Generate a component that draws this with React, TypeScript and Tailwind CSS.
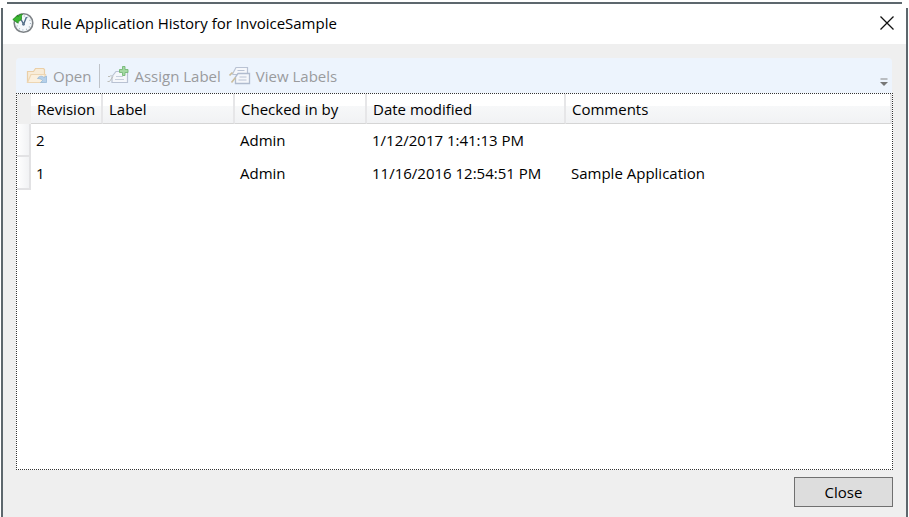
const revisions = [
  { revision: "2", label: "", user: "Admin", modified: "1/12/2017 1:41:13 PM", comments: "" },
  { revision: "1", label: "", user: "Admin", modified: "11/16/2016 12:54:51 PM", comments: "Sample Application" },
];

const headCell =
  "h-[30px] border-b border-[#d5d5d5] border-r-2 border-r-[#e6e6e8] bg-linear-to-b from-white from-40% via-[#f7f8f9] via-42% to-[#f1f2f4] pl-[6px] text-left font-normal whitespace-nowrap";

const bodyCell = "pb-[2px] pl-[5px] whitespace-nowrap";

function HistoryIcon() {
  return (
    <svg width="22" height="22" viewBox="0 0 22 22" aria-hidden="true">
      <circle cx="11.5" cy="11" r="9.3" fill="#f4f8fb" stroke="#7e8387" strokeWidth="1.6" />
      <circle cx="11.5" cy="11" r="7" fill="none" stroke="#9fb0bf" strokeWidth="1.2" strokeDasharray="1 2.67" />
      <path d="M11.5 12L9 7.5M11.500 12.500L14.500 5" fill="none" stroke="#4d6a86" strokeWidth="1.4" />
      <circle cx="11.5" cy="12.3" r="1.4" fill="#5f7890" />
      <path
        d="M0.800 7.500L6 3v2C7 2.800 8.500 2 10.500 2.200c-1 1-1.200 2-1 3.800.1 1.500-.8 3-3.300 3.200v2z"
        fill="#3cb832"
        stroke="#1f861c"
        strokeWidth="0.800"
      />
    </svg>
  );
}

function OpenIcon() {
  return (
    <svg width="22" height="20" viewBox="0 0 22 20" aria-hidden="true">
      <path d="M1.500 16.500V5.500h6l2-3h8l1 1v5" fill="#f8ecd8" stroke="#eacfa8" strokeWidth="1.2" />
      <path d="M1.500 16.500L5 8.500h14.500l-3 8z" fill="#fbf0de" stroke="#edd6b3" strokeWidth="1.2" />
      <path
        d="M11.500 12.500c1.500-2.500 4.500-3 6.500-1l2.500-1.500v6.500h-6l2-2c-1.200-1.500-3-2-5-2z"
        fill="#b5d0ea"
        stroke="#91b4d6"
        strokeWidth="0.700"
      />
    </svg>
  );
}

function AssignIcon() {
  return (
    <svg width="22" height="20" viewBox="0 0 22 20" aria-hidden="true">
      <path d="M5 10.500L9 5.500h11.500v11H5z" fill="#f5f7fb" stroke="#b9c2d3" strokeWidth="1.2" />
      <path d="M9 10.500h7M8 13.500h9" stroke="#c8cfdc" />
      <path d="M0.500 15.500h2L6 10.500M1 10.500h2l1.500-1.500" fill="none" stroke="#bdbdb8" />
      <path d="M15.500 0.500h2.500v3h3v3h-3v3h-2.500v-3h-3v-3h3z" fill="#a4d9a2" stroke="#75b877" strokeWidth="0.900" />
    </svg>
  );
}

function ViewIcon() {
  return (
    <svg width="22" height="20" viewBox="0 0 22 20" aria-hidden="true">
      <path d="M3.500 8L7 1.500h11.500v7H4z" fill="#f5f7fb" stroke="#b9c2d3" strokeWidth="1.2" />
      <path d="M6.500 11L9 7.500h11.500v10h-14z" fill="#f5f7fb" stroke="#b0bbce" strokeWidth="1.3" />
      <path d="M8.500 4.500h7M10.500 11h7M9.500 14h8" stroke="#b9c2d3" />
      <path d="M0.500 9.500L3.500 6.500M2.500 16.500l4-5" fill="none" stroke="#cbbd9c" strokeWidth="1.6" />
    </svg>
  );
}

export default function App() {
  return (
    <div className="flex min-h-screen flex-col bg-white font-['Open_Sans','Noto_Sans',sans-serif] text-[15px] leading-5 text-black">
      {/* Top edge of the window frame */}
      <div className="mx-[7px] mt-[2px] mb-1 h-[2px] bg-[#5d676d]" />
      <div className="mr-px ml-px flex flex-1 flex-col border-x-2 border-[#5d676d]">
        <header className="flex h-9 items-start justify-between pr-3 pl-[9px]">
          <div className="flex items-center gap-[7px] pt-1">
            <HistoryIcon />
            <h1>Rule Application History for InvoiceSample</h1>
          </div>
          <button type="button" aria-label="Close window" className="pt-2">
            <svg width="14" height="14" viewBox="0 0 14 14" aria-hidden="true">
              <path d="M0.500 0.500l13 13M13.500 0.500l-13 13" stroke="#111" strokeWidth="1.300" />
            </svg>
          </button>
        </header>

        <main className="flex flex-1 flex-col bg-[#efefef] px-[13px] pt-[14px] pb-[10px]">
          <div role="toolbar" className="mr-px flex h-[35px] items-center rounded-t-[4px] bg-[#edf4fd] pl-[10px] text-[#9a9b9d]">
            <button type="button" disabled className="flex items-center gap-[5px]">
              <OpenIcon />
              Open
            </button>
            <div className="mr-[7px] ml-2 h-6 w-px bg-[#bfc3c9]" />
            <button type="button" disabled className="flex items-center gap-[5px]">
              <AssignIcon />
              Assign Label
            </button>
            <button type="button" disabled className="ml-2 flex items-center gap-[5px]">
              <ViewIcon />
              View Labels
            </button>
            <button type="button" aria-label="Toolbar options" className="mr-1 ml-auto pt-3">
              <svg width="8" height="8" viewBox="0 0 8 8" aria-hidden="true">
                <path d="M0.500 1h7" stroke="#858585" />
                <path d="M0 4h8L4 8z" fill="#777" />
              </svg>
            </button>
          </div>

          <div className="flex-1 border border-dotted border-[#333] bg-white">
            <table className="w-full table-fixed border-separate border-spacing-0">
              <colgroup>
                <col className="w-[14px]" />
                <col className="w-[72px]" />
                <col className="w-[132px]" />
                <col className="w-[132px]" />
                <col className="w-[199px]" />
                <col />
              </colgroup>
              <thead>
                <tr>
                  <td className="bg-[#efefef]" />
                  <th className={headCell}>Revision</th>
                  <th className={headCell}>Label</th>
                  <th className={headCell}>Checked in by</th>
                  <th className={headCell}>Date modified</th>
                  <th className={headCell}>Comments</th>
                </tr>
              </thead>
              <tbody>
                {revisions.map((row) => (
                  <tr key={row.revision} className="h-[33px]">
                    <td className="border-r-2 border-b-2 border-[#e2e2e4] bg-linear-to-r from-white to-[#f1f2f4]" />
                    <td className={bodyCell}>{row.revision}</td>
                    <td className={bodyCell}>{row.label}</td>
                    <td className={bodyCell}>{row.user}</td>
                    <td className={bodyCell}>{row.modified}</td>
                    <td className={bodyCell}>{row.comments}</td>
                  </tr>
                ))}
              </tbody>
            </table>
          </div>

          <button type="button" className="mt-[7px] h-[30px] w-[99px] self-end border border-[#707070] bg-[#dddddd]">
            Close
          </button>
        </main>
      </div>
    </div>
  );
}
